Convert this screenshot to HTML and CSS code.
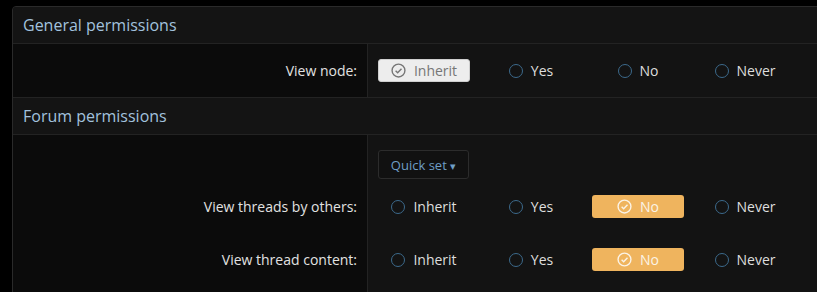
FILE: index.html
```html
<!DOCTYPE html>
<html lang="en">
  <head>
    <meta charset="UTF-8" />
    <title>Permissions</title>
    <link rel="stylesheet" href="styles.css">
  </head>
  <body>
    <div class="panel">
      <h2 class="block-header">General permissions</h2>
      <div class="form-row">
        <div class="row-label">View node:</div>
        <div class="row-input">
          <div class="choices">
            <span class="choice is-inherit">
              <svg class="tick" viewBox="0 0 14 14"><circle cx="7" cy="7" r="6" /><path d="M4.3 7.2l1.9 1.9 3.6-3.8" /></svg>
              Inherit
            </span>
            <span class="choice"><i class="radio"></i>Yes</span>
            <span class="choice"><i class="radio"></i>No</span>
            <span class="choice"><i class="radio"></i>Never</span>
          </div>
        </div>
      </div>

      <h2 class="block-header">Forum permissions</h2>
      <div class="form-row top-row">
        <div class="row-label"></div>
        <div class="row-input">
          <button class="quick-set">Quick set <span class="caret">&#9662;</span></button>
        </div>
      </div>
      <div class="form-row tight">
        <div class="row-label">View threads by others:</div>
        <div class="row-input">
          <div class="choices">
            <span class="choice"><i class="radio"></i>Inherit</span>
            <span class="choice"><i class="radio"></i>Yes</span>
            <span class="choice is-no">
              <svg class="tick" viewBox="0 0 14 14"><circle cx="7" cy="7" r="6" /><path d="M4.3 7.2l1.9 1.9 3.6-3.8" /></svg>
              No
            </span>
            <span class="choice"><i class="radio"></i>Never</span>
          </div>
        </div>
      </div>
      <div class="form-row last-row">
        <div class="row-label">View thread content:</div>
        <div class="row-input">
          <div class="choices">
            <span class="choice"><i class="radio"></i>Inherit</span>
            <span class="choice"><i class="radio"></i>Yes</span>
            <span class="choice is-no">
              <svg class="tick" viewBox="0 0 14 14"><circle cx="7" cy="7" r="6" /><path d="M4.3 7.2l1.9 1.9 3.6-3.8" /></svg>
              No
            </span>
            <span class="choice"><i class="radio"></i>Never</span>
          </div>
        </div>
      </div>
    </div>
  </body>
</html>
```

FILE: styles.css
```css
* {
  box-sizing: border-box;
  margin: 0;
  padding: 0;
}

body {
  background-color: #000;
  font-family: "Open Sans", "Noto Sans", sans-serif;
  overflow: hidden;
  padding: 6px 0 0 12px;
}

.panel {
  width: 900px;
  border: 1px solid #2a2a2a;
  border-radius: 4px 0 0 0;
  background-color: #131313;
  overflow: hidden;
}

.block-header {
  height: 37px;
  padding: 0 10px;
  display: flex;
  align-items: center;
  font-size: 16px;
  font-weight: normal;
  color: #a2c2de;
  background-color: #141414;
  border-bottom: 1px solid #232323;
}

.form-row {
  display: flex;
  border-bottom: 1px solid #232323;
}
.form-row.top-row,
.form-row.tight {
  border-bottom: none;
}
.form-row.last-row .row-label,
.form-row.last-row .row-input {
  padding-bottom: 40px;
}

.row-label {
  width: 355px;
  flex: none;
  background-color: #0b0b0b;
  border-right: 1px solid #232323;
  padding: 15px 10px;
  display: flex;
  align-items: flex-start;
  justify-content: flex-end;
  line-height: 23px;
  font-size: 14px;
  color: #e2e2e2;
}

.row-input {
  flex: 1;
  padding: 15px 10px;
  background-color: #131313;
}
.top-row .row-input {
  padding-bottom: 1px;
}

.choices {
  display: flex;
  gap: 15px;
}

.choice {
  width: 92px;
  height: 23px;
  display: flex;
  align-items: center;
  justify-content: center;
  gap: 8px;
  font-size: 14px;
  color: #dedede;
  border-radius: 3px;
}

.radio {
  width: 14px;
  height: 14px;
  border: 1.5px solid #3c6a8c;
  border-radius: 50%;
}

.tick {
  width: 15px;
  height: 15px;
  fill: none;
  stroke: currentColor;
  stroke-width: 1.3;
}

.is-inherit {
  background-color: #ededed;
  border: 1px solid #cfcfcf;
  color: #767676;
}

.is-no {
  background-color: #efb45e;
  color: #fbf3e6;
}

.quick-set {
  width: 91px;
  height: 29px;
  background-color: #111;
  border: 1px solid #2c2c2c;
  border-radius: 3px;
  font-family: inherit;
  font-size: 13px;
  color: #6f9fc6;
}
.caret {
  font-size: 11px;
}
```
